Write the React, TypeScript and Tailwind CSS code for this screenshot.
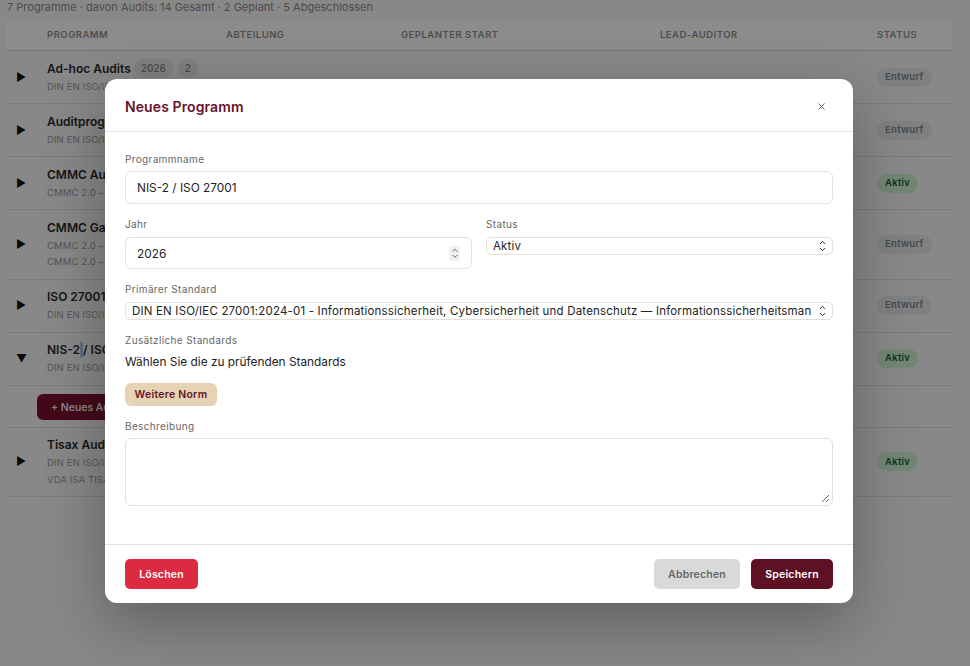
import React from 'react';
import { ChevronDown, ChevronUp, X } from 'lucide-react';

interface IRow {
  name: React.ReactNode;
  subs: string[];
  status: 'Entwurf' | 'Aktiv';
  open?: boolean;
  chips?: string[];
}

const rows: IRow[] = [
  { name: 'Ad-hoc Audits', subs: ['DIN EN ISO/IEC 27001'], status: 'Entwurf', chips: ['2026', '2'] },
  { name: 'Auditprogramm', subs: ['DIN EN ISO/IEC 27001'], status: 'Entwurf' },
  { name: 'CMMC Audit', subs: ['CMMC 2.0 – Level 2'], status: 'Aktiv' },
  { name: 'CMMC Gap', subs: ['CMMC 2.0 – Level 1', 'CMMC 2.0 – Level 2'], status: 'Entwurf' },
  { name: 'ISO 27001', subs: ['DIN EN ISO/IEC 27001'], status: 'Entwurf' },
  {
    name: (
      <>
        NIS-2<span className="bg-[#a8c8f0]">&nbsp;</span>/ ISO 27001
      </>
    ),
    subs: ['DIN EN ISO/IEC 27001'],
    status: 'Aktiv',
    open: true,
  },
];

const Badge = ({ status }: { status: string }) => (
  <span
    className={`inline-flex h-[19px] items-center rounded-full px-2 text-[9.5px] font-semibold tracking-[0.3px] ${
      status === 'Aktiv' ? 'bg-[#d0f5d8] text-[#1a5c30]' : 'bg-[#e7eaec] text-[#7f8488]'
    }`}
  >
    {status}
  </span>
);

const Row = ({ name, subs, status, open, chips }: IRow) => (
  <div className="grid grid-cols-[41px_830px_1fr] items-center border-b border-[#e4e0da] py-[8.75px]">
    <span className="pl-[10px] text-[11px] leading-none text-[#111]">{open ? '▼' : '▶'}</span>
    <div>
      <div className="flex h-[18px] items-center gap-[5px] text-[12px] font-semibold text-[#2a2a2a]">
        <span className="-mr-[2px]">{name}</span>
        {chips?.map((c) => (
          <span key={c} className="rounded-full bg-[#e9e7e4] px-[7px] py-[2px] text-[10px] font-medium leading-[15px] text-[#888]">
            {c}
          </span>
        ))}
      </div>
      {subs.map((s) => (
        <div key={s} className="mt-[2px] text-[9.5px] leading-[14.5px] tracking-[0.1px] text-[#999]">
          {s}
        </div>
      ))}
    </div>
    <div className="flex">
      <Badge status={status} />
    </div>
  </div>
);

const Label = ({ children, className = 'mb-[7px]' }: { children: React.ReactNode; className?: string }) => (
  <label className={`block text-[10px] leading-[12px] tracking-[0.35px] text-[#666] ${className}`}>{children}</label>
);

const SelectChevrons = () => (
  <span className="flex shrink-0 flex-col items-center text-[#222]">
    <ChevronUp size={9} strokeWidth={2.6} className="-mb-[2px]" />
    <ChevronDown size={9} strokeWidth={2.6} />
  </span>
);

const Select = ({ children }: { children: React.ReactNode }) => (
  <div className="flex h-[18px] items-center justify-between gap-[6px] overflow-hidden whitespace-nowrap rounded-[5px] border border-[#e5dfd5] pl-[6px] pr-[5px] text-[11.5px] tracking-[0.18px] text-[#222]">
    <span className="overflow-hidden pt-[1px]">{children}</span>
    <SelectChevrons />
  </div>
);

export default function App() {
  return (
    <div className="relative h-[666px] w-[970px] overflow-hidden bg-[#faf8f8] pl-[6px] pr-[18px] font-['Inter',sans-serif]">
      <div className="h-5 pl-[1px] pt-[1px] text-[11px] leading-[12px] text-[#8a8a8a]">
        7 Programme · davon Audits: 14 Gesamt · 2 Geplant · 5 Abgeschlossen
      </div>

      <div className="grid h-[31px] grid-cols-[41px_179px_175px_259px_217px_1fr] items-center border-b border-[#e0dac0] bg-white pt-[1px] text-[9.5px] font-semibold tracking-[0.5px] text-[#8f8f8f]">
        <span />
        <span>PROGRAMM</span>
        <span>ABTEILUNG</span>
        <span>GEPLANTER START</span>
        <span>LEAD-AUDITOR</span>
        <span>STATUS</span>
      </div>

      {rows.map((r, i) => (
        <Row key={i} {...r} />
      ))}
      <div className="h-[42px] border-b border-[#e4e0da] pl-[31px] pt-[7px]">
        <button className="h-[26px] rounded-[6px] bg-[#7a1230] px-[14px] text-[10.5px] font-medium text-white">+ Neues Audit</button>
      </div>
      <Row name="Tisax Audit" subs={['DIN EN ISO/IEC 27001', 'VDA ISA TISAX']} status="Aktiv" />

      <div className="absolute inset-0 flex items-start justify-center bg-black/45 pr-[12px] pt-[79px]">
        <div className="h-[524px] w-[748px] overflow-hidden rounded-[12px] bg-white shadow-[0_20px_60px_rgba(0,0,0,0.3)]">
          <div className="flex h-[53px] items-center justify-between border-b border-[#e4e0da] pl-5 pr-[26px] pt-[2px]">
            <h2 className="text-[14px] font-semibold tracking-[0.1px] text-[#65142a]">Neues Programm</h2>
            <X size={11} strokeWidth={2} className="text-[#555]" />
          </div>

          <div className="h-[413px] border-b border-[#e4ded3] px-5 pt-[21px]">
            <Label className="mb-[6px]">Programmname</Label>
            <div className="flex h-[33px] items-center rounded-[6px] border border-[#e5dfd5] px-[11px] pt-[2px] text-[11.85px] text-[#222]">
              NIS-2 / ISO 27001
            </div>

            <div className="mt-[14px] grid grid-cols-2 gap-[14px]">
              <div>
                <Label>Jahr</Label>
                <div className="flex h-[32px] items-center justify-between rounded-[6px] border border-[#e5dfd5] px-[11px] text-[11.85px] text-[#222]">
                  <span className="pt-[3px]">2026</span>
                  <span className="flex h-[15px] w-[11px] flex-col items-center justify-center rounded-[2px] bg-[#f0f0f0] text-[#333]">
                    <ChevronUp size={10} strokeWidth={2} className="-mb-[2px]" />
                    <ChevronDown size={10} strokeWidth={2} />
                  </span>
                </div>
              </div>
              <div>
                <Label>Status</Label>
                <Select>Aktiv</Select>
              </div>
            </div>

            <div className="mt-[14px]">
              <Label>Primärer Standard</Label>
              <Select>
                DIN EN ISO/IEC 27001:2024-01 - Informationssicherheit, Cybersicherheit und Datenschutz — Informationssicherheitsman
              </Select>
            </div>

            <div className="mt-[14px]">
              <Label className="mb-0">Zusätzliche Standards</Label>
              <p className="mt-[9px] text-[11.85px] leading-[15px] text-[#222]">Wählen Sie die zu prüfenden Standards</p>
              <button className="mt-[13px] h-[23px] rounded-[6px] bg-[#e6d3b3] px-[9.5px] text-[10.5px] font-semibold tracking-[0.25px] text-[#65142a]">
                Weitere Norm
              </button>
            </div>

            <div className="mt-[14px]">
              <Label className="mb-[6px]">Beschreibung</Label>
              <div className="relative h-[68px] rounded-[6px] border border-[#e5dfd5]">
                <svg className="absolute bottom-[2px] right-[2px]" width="9" height="9" viewBox="0 0 9 9" fill="none" stroke="#666" strokeWidth="1">
                  <path d="M1 8 8 1M5 8 8 5" />
                </svg>
              </div>
            </div>
          </div>

          <div className="flex h-[58px] items-center justify-between px-5">
            <button className="h-[30px] w-[73px] rounded-[5px] bg-[#dc2b41] pt-[2px] text-[10.5px] font-semibold tracking-[0.2px] text-white">Löschen</button>
            <div className="flex gap-[11px]">
              <button className="h-[30px] w-[86px] rounded-[5px] bg-[#d9d9d9] pt-[2px] text-[10.5px] font-semibold tracking-[0.2px] text-[#666]">Abbrechen</button>
              <button className="h-[30px] w-[82px] rounded-[5px] bg-[#5e1024] pt-[2px] text-[10.5px] font-semibold tracking-[0.2px] text-white">Speichern</button>
            </div>
          </div>
        </div>
      </div>
    </div>
  );
}
